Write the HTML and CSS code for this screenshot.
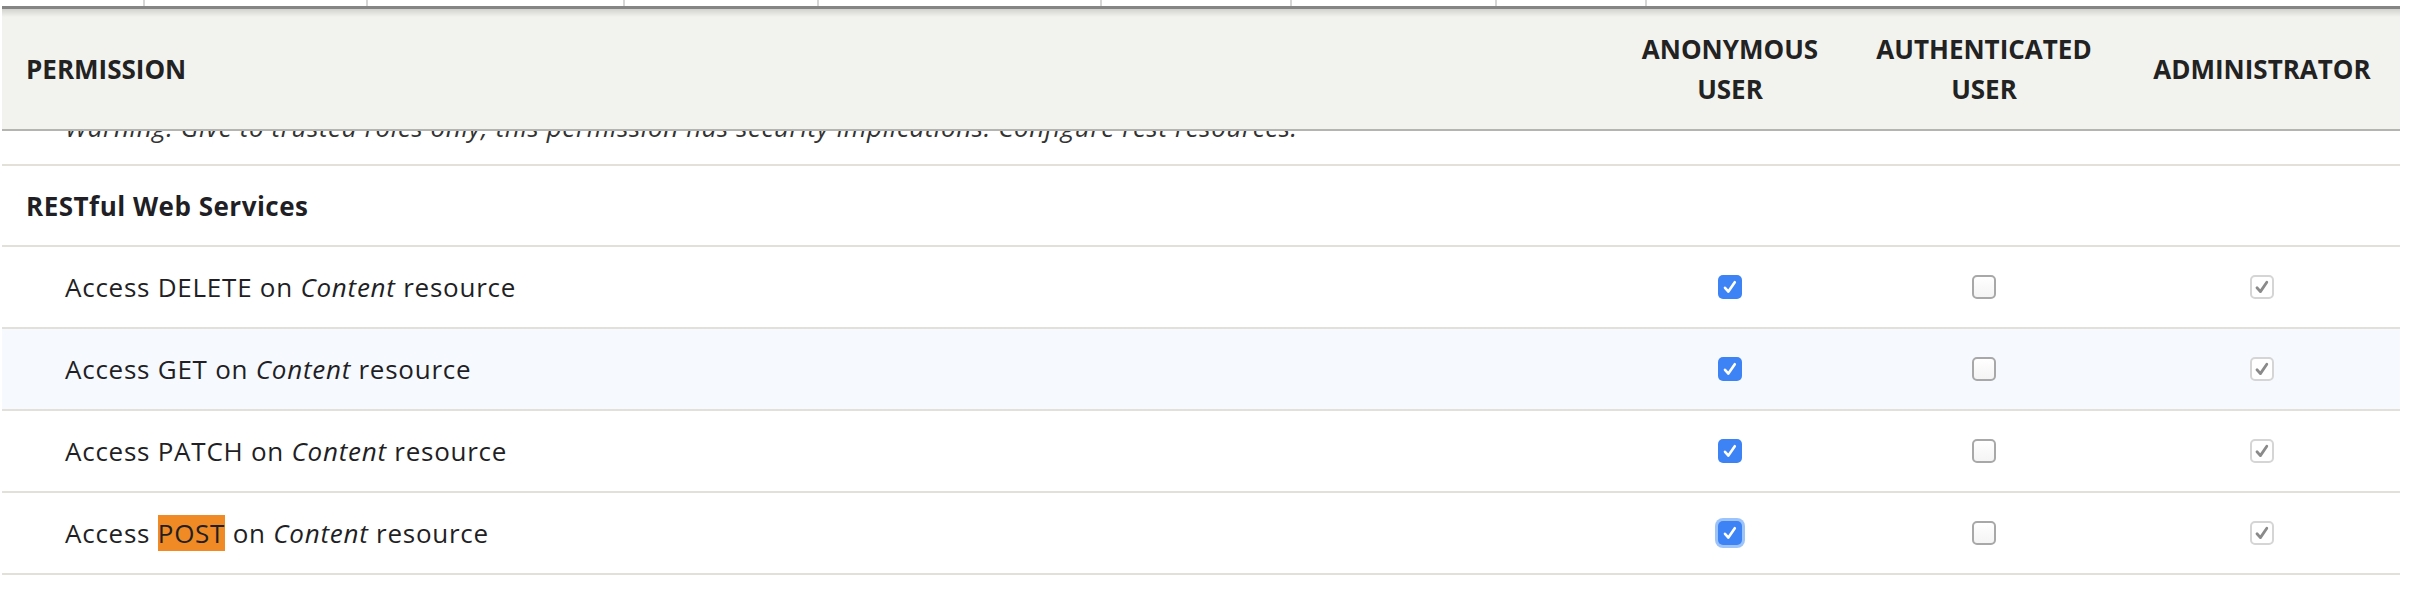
FILE: index.html
```html
<!DOCTYPE html>
<html lang="en">
<head>
<meta charset="utf-8">
<title>Permissions</title>
<link rel="stylesheet" href="styles.css">
</head>
<body>
<div class="page">
  <div class="strip">
    <div class="sc w1"></div><div class="sc w2"></div><div class="sc w3"></div><div class="sc w4"></div>
    <div class="sc w5"></div><div class="sc w6"></div><div class="sc w7"></div><div class="sc w8"></div>
    <div class="sc last"></div>
  </div>

  <div class="table">
    <div class="row warn">
      <div class="cell perm"><em class="desc">Warning: Give to trusted roles only; this permission has security implications. Configure rest resources.</em></div>
      <div class="cell"></div><div class="cell"></div><div class="cell"></div>
    </div>
    <div class="row group">
      <div class="cell module">RESTful Web Services</div>
      <div class="cell"></div><div class="cell"></div><div class="cell"></div>
    </div>
    <div class="row">
      <div class="cell perm">Access DELETE on <em>Content</em> resource</div>
      <div class="cell box"><span class="cb on"><svg viewBox="0 0 24 24"><path d="M7 12.8 L10.4 16.6 L16.8 7.2"/></svg></span></div>
      <div class="cell box"><span class="cb off"></span></div>
      <div class="cell box"><span class="cb dis"><svg viewBox="0 0 24 24"><path d="M7 12.8 L10.4 16.6 L16.8 7.2"/></svg></span></div>
    </div>
    <div class="row hover">
      <div class="cell perm">Access GET on <em>Content</em> resource</div>
      <div class="cell box"><span class="cb on"><svg viewBox="0 0 24 24"><path d="M7 12.8 L10.4 16.6 L16.8 7.2"/></svg></span></div>
      <div class="cell box"><span class="cb off"></span></div>
      <div class="cell box"><span class="cb dis"><svg viewBox="0 0 24 24"><path d="M7 12.8 L10.4 16.6 L16.8 7.2"/></svg></span></div>
    </div>
    <div class="row">
      <div class="cell perm">Access PATCH on <em>Content</em> resource</div>
      <div class="cell box"><span class="cb on"><svg viewBox="0 0 24 24"><path d="M7 12.8 L10.4 16.6 L16.8 7.2"/></svg></span></div>
      <div class="cell box"><span class="cb off"></span></div>
      <div class="cell box"><span class="cb dis"><svg viewBox="0 0 24 24"><path d="M7 12.8 L10.4 16.6 L16.8 7.2"/></svg></span></div>
    </div>
    <div class="row">
      <div class="cell perm">Access <mark class="find">POST</mark> on <em>Content</em> resource</div>
      <div class="cell box"><span class="cb on focus"><svg viewBox="0 0 24 24"><path d="M7 12.8 L10.4 16.6 L16.8 7.2"/></svg></span></div>
      <div class="cell box"><span class="cb off"></span></div>
      <div class="cell box"><span class="cb dis"><svg viewBox="0 0 24 24"><path d="M7 12.8 L10.4 16.6 L16.8 7.2"/></svg></span></div>
    </div>
  </div>

  <div class="sticky">
    <div class="th th-perm">PERMISSION</div>
    <div class="th th-role">ANONYMOUS<br>USER</div>
    <div class="th th-role">AUTHENTICATED<br>USER</div>
    <div class="th th-role">ADMINISTRATOR</div>
  </div>
</div>
</body>
</html>
```

FILE: styles.css
```css
html, body {
  margin: 0;
  padding: 0;
  background: #ffffff;
}

body {
  font-family: "Open Sans", "Noto Sans", sans-serif;
  font-size: 26px;
  color: #1f1f25;
}

.page {
  position: relative;
  width: 2412px;
  height: 598px;
  overflow: hidden;
}

/* content behind the sticky header (top edge of a previous block) */
.strip {
  display: flex;
  height: 6px;
}
.sc {
  border-right: 2px solid #d6d6d6;
  box-sizing: border-box;
}
.w1 { width: 145px; }
.w2 { width: 223px; }
.w3 { width: 257px; }
.w4 { width: 194px; }
.w5 { width: 283px; }
.w6 { width: 190px; }
.w7 { width: 205px; }
.w8 { width: 150px; }
.sc.last { flex: 1; border-right: 0; }

.table {
  margin-left: 2px;
  width: 2398px;
  letter-spacing: 0.75px;
}

.row {
  display: grid;
  grid-template-columns: 1614px 228px 280px 276px;
  height: 82px;
  border-bottom: 2px solid #e3e0da;
  box-sizing: border-box;
  align-items: center;
}

.row.hover {
  background: #f6faff;
}

.row.warn {
  height: 160px;
  align-items: end;
}

.row.group {
  height: 81px;
}

.cell {
  min-width: 0;
}

.perm {
  padding-left: 63px;
  white-space: nowrap;
}

.row.warn .perm {
  padding-bottom: 19px;
}

.desc {
  font-size: 26px;
  letter-spacing: 0.6px;
  color: #333333;
}

.module {
  padding-left: 24px;
  font-weight: 700;
  letter-spacing: 0.5px;
}

em {
  font-style: italic;
}

.find {
  background: #f08a24;
  color: #1f1f25;
}

.box {
  display: flex;
  justify-content: center;
  align-items: center;
}

/* checkboxes */
.cb {
  display: block;
  width: 24px;
  height: 24px;
  box-sizing: border-box;
  border-radius: 5px;
}
.cb svg {
  display: block;
  width: 24px;
  height: 24px;
}
.cb path {
  fill: none;
  stroke-linecap: round;
  stroke-linejoin: round;
}
.cb.on {
  background: #3d83f6;
}
.cb.on path {
  stroke: #ffffff;
  stroke-width: 2.6;
}
.cb.on.focus {
  box-shadow: 0 0 0 3px #9cc4fb;
}
.cb.off {
  background: linear-gradient(#ffffff, #f4f4f4);
  border: 2px solid #a8a8a8;
}
.cb.dis {
  background: #ffffff;
  border: 2px solid #d5d5d5;
}
.cb.dis svg {
  margin: -2px;
}
.cb.dis path {
  stroke: #8a8a8a;
  stroke-width: 2.8;
}

/* sticky table header overlaying the scrolled content */
.sticky {
  position: absolute;
  top: 6px;
  left: 2px;
  width: 2398px;
  height: 125px;
  box-sizing: border-box;
  display: grid;
  grid-template-columns: 1614px 228px 280px 276px;
  align-items: center;
  background: linear-gradient(#d2d2cf 0, #f2f2ee 8px);
  border-top: 3px solid #858585;
  border-bottom: 2px solid #b4b4b0;
  font-weight: 700;
  color: #222222;
  line-height: 40px;
}

.th-perm {
  padding-left: 24px;
}

.th-role {
  text-align: center;
}
```
